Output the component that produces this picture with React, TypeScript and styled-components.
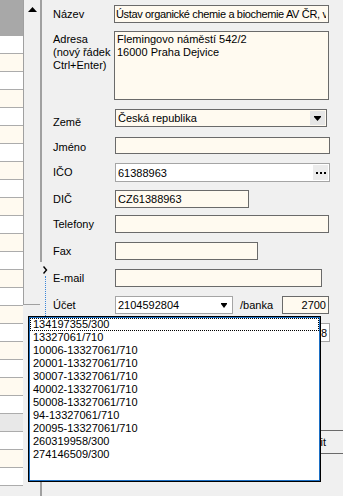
import React from "react";
import styled, { createGlobalStyle } from "styled-components";

const GlobalStyle = createGlobalStyle`
  html, body {
    margin: 0;
    padding: 0;
    background: #f0f0f0;
  }
  body {
    font-family: "Liberation Sans", Arial, sans-serif;
    font-size: 11px;
    color: #000;
  }
`;

const CREAM = "#fffaf0";

const Page = styled.div`
  position: relative;
  display: flex;
  width: 343px;
  height: 496px;
  overflow: hidden;
  background: #f0f0f0;
`;

// left grid (only a sliver visible)
const ListPane = styled.div`
  width: 23px;
  flex: 0 0 23px;
  display: flex;
  flex-direction: column;
  overflow: hidden;
`;

const ListHeader = styled.div`
  height: 36px;
  flex: 0 0 36px;
  background: #a8a8a8;
`;

const ListRow = styled.div<{ $bg: string }>`
  height: 18px;
  flex: 0 0 18px;
  box-sizing: border-box;
  border-bottom: 1px solid #acacac;
  background: ${({ $bg }) => $bg};
`;

const ScrollCol = styled.div`
  width: 17px;
  flex: 0 0 17px;
  display: flex;
  flex-direction: column;
`;

const ScrollBar = styled.div`
  height: 305px;
  box-sizing: border-box;
  border-left: 1px solid #a0a0a0;
  border-bottom: 1px solid #a0a0a0;
  background: #f0f0f0;
`;

const ScrollButton = styled.div`
  height: 17px;
  display: flex;
  align-items: center;
  justify-content: center;
  padding-top: 1px;
  box-sizing: border-box;
`;

const Splitter = styled.div`
  width: 8px;
  flex: 0 0 8px;
  display: flex;
  flex-direction: column;
`;

const SplitLine = styled.div<{ $h?: number }>`
  ${({ $h }) => ($h ? `height: ${$h}px; flex: 0 0 ${$h}px;` : "flex: 1;")}
  border-left: 2px solid #a0a0a0;
`;

const SplitMarker = styled.div`
  height: 54px;
  flex: 0 0 54px;
  display: flex;
  flex-direction: column;
  padding: 4px 0 0 3px;
  box-sizing: border-box;
`;

const DottedLine = styled.div`
  flex: 1;
  margin: 2px 0 0 2px;
  border-left: 1px dotted #3b86d8;
`;

const Form = styled.div`
  flex: 1;
  display: flex;
  flex-direction: column;
  padding-left: 5px;
`;

const Row = styled.div<{ $mt: number; $h: number; $top?: boolean }>`
  display: flex;
  align-items: ${({ $top }) => ($top ? "flex-start" : "center")};
  margin-top: ${({ $mt }) => $mt}px;
  height: ${({ $h }) => $h}px;
  flex: 0 0 ${({ $h }) => $h}px;
`;

const Label = styled.div<{ $dy?: number }>`
  width: 62px;
  flex: 0 0 62px;
  line-height: 13px;
  white-space: nowrap;
  position: relative;
  top: ${({ $dy }) => $dy || 0}px;
`;

const Field = styled.div<{
  $w: number;
  $bg?: string;
  $border?: string;
  $shift?: number;
  $right?: boolean;
}>`
  box-sizing: border-box;
  width: ${({ $w }) => $w}px;
  height: 100%;
  margin-left: ${({ $shift }) => $shift || 0}px;
  background: ${({ $bg }) => $bg || CREAM};
  border: 1px solid ${({ $border }) => $border || "#6a6a6a"};
  display: flex;
  align-items: center;
  padding: 0 2px 0 2px;
  white-space: nowrap;
  overflow: hidden;
  line-height: 14px;
  justify-content: ${({ $right }) => ($right ? "flex-end" : "flex-start")};
`;

const FieldText = styled.span<{ $tight?: boolean }>`
  flex: 1;
  overflow: hidden;
  letter-spacing: ${({ $tight }) => ($tight ? "-0.35px" : "normal")};
`;

const MultiText = styled.div`
  box-sizing: border-box;
  width: 215px;
  height: 100%;
  margin-left: -1px;
  background: ${CREAM};
  border: 1px solid #6a6a6a;
  padding: 1px 2px;
  line-height: 13px;
  white-space: pre;
  overflow: hidden;
`;

const SideButton = styled.div<{ $bg?: string }>`
  width: 15px;
  flex: 0 0 15px;
  align-self: stretch;
  margin: 1px -1px 1px 0;
  background: ${({ $bg }) => $bg || "#e6e6e6"};
  display: flex;
  align-items: center;
  justify-content: center;
`;

const InlineLabel = styled.div`
  margin-left: 7px;
  width: 42px;
  flex: 0 0 42px;
  line-height: 13px;
`;

const ActionButton = styled.div`
  box-sizing: border-box;
  margin-left: 202px;
  width: 91px;
  height: 100%;
  border: 1px solid #6a6a6a;
  background: #f0f0f0;
  display: flex;
  align-items: center;
  justify-content: flex-end;
  padding-right: 19px;
`;

const DropList = styled.div`
  position: absolute;
  left: 28px;
  top: 316px;
  width: 293px;
  height: 166px;
  box-sizing: border-box;
  border: 1px solid #000;
  box-shadow: inset 0 0 0 1px #1c6fc4;
  background: #fff;
  padding: 1px 1px;
`;

const DropItem = styled.div<{ $focus?: boolean }>`
  height: 13px;
  line-height: 13px;
  padding-left: 3px;
  white-space: nowrap;
  outline: ${({ $focus }) => ($focus ? "1px dotted #000" : "none")};
  outline-offset: -1px;
`;

const UpArrow = () => (
  <svg width="9" height="5" viewBox="0 0 9 5">
    <polygon points="0,5 4.5,0 9,5" fill="#000" />
  </svg>
);

const DownArrow = ({ w = 7 }: { w?: number }) => (
  <svg width={w} height="5" viewBox={`0 0 ${w} 5`}>
    <rect x="0" y="0" width={w} height="1" fill="#000" />
    <polygon points={`0,1 ${w},1 ${w / 2},5`} fill="#000" />
  </svg>
);

const Dots = () => (
  <svg width="10" height="2" viewBox="0 0 10 2">
    <rect x="0" y="0" width="2" height="2" fill="#000" />
    <rect x="4" y="0" width="2" height="2" fill="#000" />
    <rect x="8" y="0" width="2" height="2" fill="#000" />
  </svg>
);

const Chevron = () => (
  <svg width="5" height="8" viewBox="0 0 5 8">
    <polyline points="0.5,0.5 3.5,4 0.5,7.5" fill="none" stroke="#000" strokeWidth="1.4" />
  </svg>
);

const listRows = Array.from({ length: 25 }, (_, i) =>
  i === 21 ? "#e8e8e8" : i % 2 === 0 ? "#ffffff" : CREAM
);

const accounts = [
  "134197355/300",
  "13327061/710",
  "10006-13327061/710",
  "20001-13327061/710",
  "30007-13327061/710",
  "40002-13327061/710",
  "50008-13327061/710",
  "94-13327061/710",
  "20095-13327061/710",
  "260319958/300",
  "274146509/300",
];

export default function App() {
  return (
    <Page>
      <GlobalStyle />
      <ListPane>
        <ListHeader />
        {listRows.map((bg, i) => (
          <ListRow key={i} $bg={bg} />
        ))}
      </ListPane>
      <ScrollCol>
        <ScrollBar>
          <ScrollButton>
            <UpArrow />
          </ScrollButton>
        </ScrollBar>
      </ScrollCol>
      <Splitter>
        <SplitLine $h={262} />
        <SplitMarker>
          <Chevron />
          <DottedLine />
        </SplitMarker>
        <SplitLine />
      </Splitter>
      <Form>
        <Row $mt={5} $h={18}>
          <Label>Název</Label>
          <Field $w={215} $shift={-1} style={{ paddingLeft: 1 }}>
            <FieldText $tight>Ústav organické chemie a biochemie AV ČR, v.v.i.</FieldText>
          </Field>
        </Row>
        <Row $mt={8} $h={69} $top>
          <Label $dy={2}>
            Adresa
            <br />
            (nový řádek
            <br />
            Ctrl+Enter)
          </Label>
          <MultiText>{"Flemingovo náměstí 542/2\n16000 Praha Dejvice"}</MultiText>
        </Row>
        <Row $mt={9} $h={18}>
          <Label $dy={4}>Země</Label>
          <Field $w={212}>
            <FieldText>Česká republika</FieldText>
            <SideButton>
              <DownArrow />
            </SideButton>
          </Field>
        </Row>
        <Row $mt={10} $h={17}>
          <Label $dy={2}>Jméno</Label>
          <Field $w={215} />
        </Row>
        <Row $mt={9} $h={19}>
          <Label>IČO</Label>
          <Field $w={215} $bg="#fff" $border="#a5a5a5">
            <FieldText>61388963</FieldText>
            <SideButton $bg="#ececec">
              <Dots />
            </SideButton>
          </Field>
        </Row>
        <Row $mt={8} $h={18}>
          <Label>DIČ</Label>
          <Field $w={134}>
            <FieldText>CZ61388963</FieldText>
          </Field>
        </Row>
        <Row $mt={7} $h={18}>
          <Label>Telefony</Label>
          <Field $w={214} />
        </Row>
        <Row $mt={9} $h={18}>
          <Label>Fax</Label>
          <Field $w={143} />
        </Row>
        <Row $mt={9} $h={18}>
          <Label>E-mail</Label>
          <Field $w={207} />
        </Row>
        <Row $mt={9} $h={18}>
          <Label>Účet</Label>
          <Field $w={118} $bg="#fff" $border="#a5a5a5">
            <FieldText>2104592804</FieldText>
            <SideButton $bg="#fff">
              <DownArrow w={6} />
            </SideButton>
          </Field>
          <InlineLabel>/banka</InlineLabel>
          <Field $w={47} $right>
            2700
          </Field>
        </Row>
        {/* row hidden under the open account list */}
        <Row $mt={9} $h={19}>
          <Label />
          <Field $w={215} $bg="#fff" $border="#a5a5a5" $right>
            8
          </Field>
        </Row>
        <Row $mt={88} $h={24}>
          <ActionButton>Zrušit</ActionButton>
        </Row>
      </Form>
      <DropList>
        {accounts.map((a, i) => (
          <DropItem key={a} $focus={i === 0}>
            {a}
          </DropItem>
        ))}
      </DropList>
    </Page>
  );
}
